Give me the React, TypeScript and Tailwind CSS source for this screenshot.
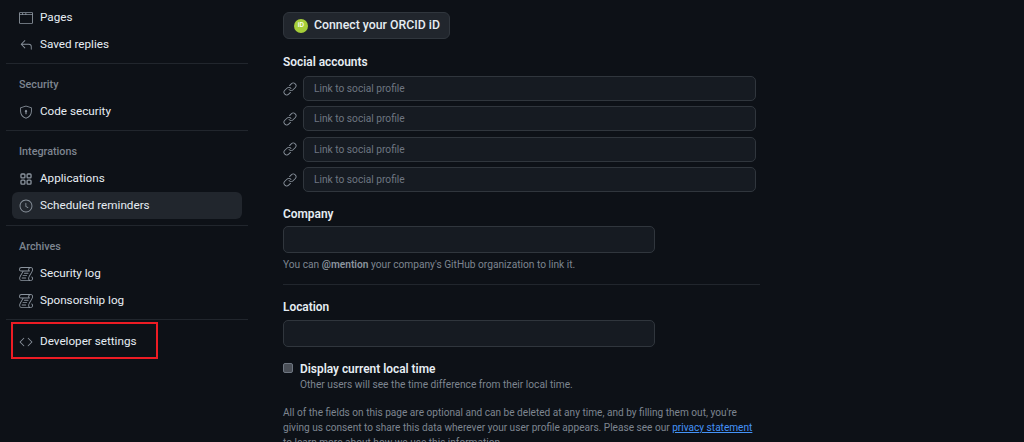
import { GoBrowser, GoClock, GoCode, GoLink, GoLog, GoReply, GoShieldLock } from "react-icons/go";
import type { IconType } from "react-icons";

function AppsIcon({ className }: { className?: string }) {
  return (
    <svg viewBox="0 0 16 16" fill="none" stroke="currentColor" strokeWidth="1.5" className={className}>
      <rect x="2.25" y="2.25" width="4.5" height="4.5" rx="1" />
      <rect x="9.25" y="2.25" width="4.5" height="4.5" rx="1" />
      <rect x="2.25" y="9.25" width="4.5" height="4.5" rx="1" />
      <rect x="9.25" y="9.25" width="4.5" height="4.5" rx="1" />
    </svg>
  );
}

function NavItem({ icon: Icon, label, active }: { icon: IconType | typeof AppsIcon; label: string; active?: boolean }) {
  return (
    <div className={`flex h-[27px] items-center gap-[7px] rounded-md pl-[7px] text-[11.7px] text-[#e6edf3] ${active ? "bg-[#21262d]" : ""}`}>
      <Icon className="size-[14px] shrink-0 text-[#8b949e]" />
      <span className="pt-[1px]">{label}</span>
    </div>
  );
}

function NavHeading({ label }: { label: string }) {
  return <div className="flex h-[27px] items-center pl-[7px] pt-[2px] text-[10.8px] font-medium text-[#7d8590]">{label}</div>;
}

function Divider() {
  return <div className="-mx-[6px] h-px bg-[#21262d]" />;
}

function SocialRow() {
  return (
    <div className="flex items-center gap-[6px]">
      <GoLink className="size-[14px] shrink-0 text-[#8b949e]" />
      <div className="flex h-[25px] w-[453px] items-center rounded-[5px] border border-[#30363d] bg-[#161b22] pl-[10px] text-[10.2px] text-[#6e7681]">
        Link to social profile
      </div>
    </div>
  );
}

function FieldLabel({ children }: { children: string }) {
  return <div className="text-[11.9px] leading-[16px] font-semibold text-[#e6edf3]">{children}</div>;
}

function TextBox() {
  return <div className="h-[27px] w-[372px] rounded-[5px] border border-[#30363d] bg-[#161b22]" />;
}

export default function App() {
  return (
    <div className="relative flex h-[442px] w-[1024px] overflow-hidden bg-[#0d1117] font-['Roboto',sans-serif]">
      <aside className="ml-[12px] w-[230px] shrink-0 pt-[4px]">
        <NavItem icon={GoBrowser} label="Pages" />
        <NavItem icon={GoReply} label="Saved replies" />
        <div className="mt-[5px] mb-[7px]"><Divider /></div>
        <NavHeading label="Security" />
        <NavItem icon={GoShieldLock} label="Code security" />
        <div className="mt-[5px] mb-[7px]"><Divider /></div>
        <NavHeading label="Integrations" />
        <NavItem icon={AppsIcon} label="Applications" />
        <NavItem icon={GoClock} label="Scheduled reminders" active />
        <div className="mt-[6px] mb-[7px]"><Divider /></div>
        <NavHeading label="Archives" />
        <NavItem icon={GoLog} label="Security log" />
        <NavItem icon={GoLog} label="Sponsorship log" />
        <div className="mt-[5px] mb-[8px]"><Divider /></div>
        <NavItem icon={GoCode} label="Developer settings" />
      </aside>

      <main className="ml-[41px] w-[477px] shrink-0 pt-[12px]">
        <div className="flex h-[27px] w-[167px] items-center gap-[6px] whitespace-nowrap rounded-md border border-[#30363d] bg-[#21262d] pl-[10px] text-[12.3px] font-medium text-[#e6edf3]">
          <span className="flex size-[14px] items-center justify-center rounded-full bg-[#a6ce39] text-[7px] text-white">iD</span>
          Connect your ORCID iD
        </div>

        <div className="mt-[15px]"><FieldLabel>Social accounts</FieldLabel></div>
        <div className="mt-[6px] flex flex-col gap-[5.4px]">
          <SocialRow />
          <SocialRow />
          <SocialRow />
          <SocialRow />
        </div>

        <div className="mt-[14px]"><FieldLabel>Company</FieldLabel></div>
        <div className="mt-[4px]"><TextBox /></div>
        <p className="mt-[4px] text-[10.2px] leading-[16px] text-[#7d8590]">
          You can <span className="font-semibold text-[#8b949e]">@mention</span> your company's GitHub organization to link it.
        </p>
        <div className="mt-[11px] h-px bg-[#21262d]" />

        <div className="mt-[14px]"><FieldLabel>Location</FieldLabel></div>
        <div className="mt-[5px]"><TextBox /></div>

        <div className="mt-[16px] flex gap-[7px]">
          <div className="size-[10px] shrink-0 rounded-[2px] border border-[#6e7681] bg-[#4a4f57]" />
          <div className="-mt-[2px]">
            <div className="text-[11.9px] leading-[16px] font-semibold text-[#e6edf3]">Display current local time</div>
            <div className="text-[10.2px] leading-[16px] text-[#7d8590]">Other users will see the time difference from their local time.</div>
          </div>
        </div>

        <p className="mt-[12px] w-[480px] text-[10.1px] leading-[15px] text-[#7d8590]">
          All of the fields on this page are optional and can be deleted at any time, and by filling them out, you're giving us consent to share this data wherever your user profile appears. Please see our{" "}
          <span className="text-[#4493f8] underline">privacy statement</span> to learn more about how we use this information.
        </p>
      </main>

      <div className="absolute top-[322px] left-[11px] h-[37px] w-[147px] border-2 border-[#ed1c24]" />
    </div>
  );
}
